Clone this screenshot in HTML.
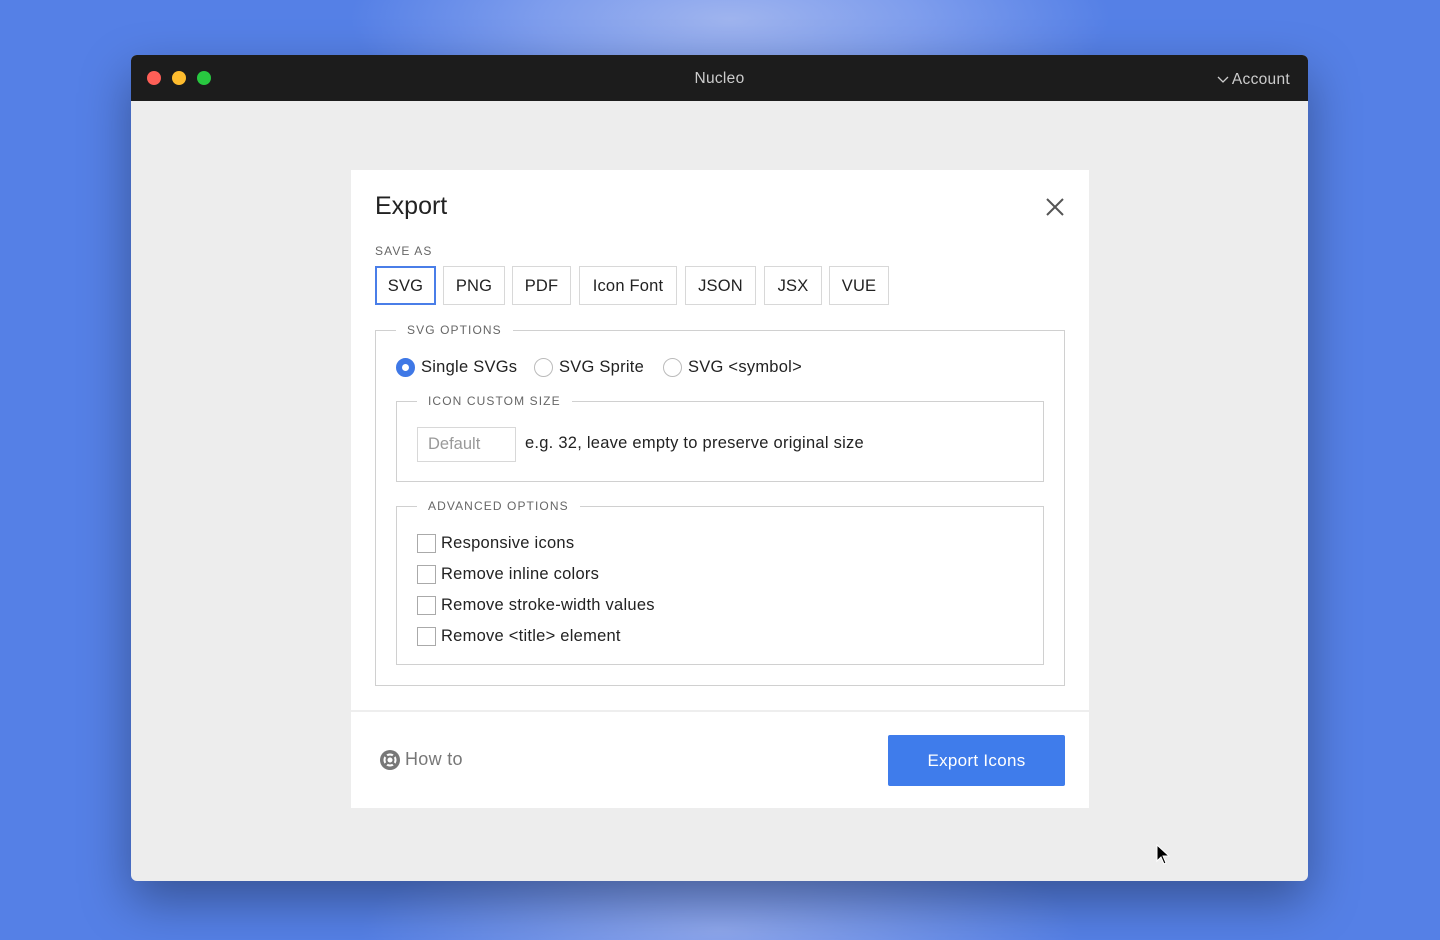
<!DOCTYPE html>
<html><head><meta charset="utf-8"><style>
*{box-sizing:border-box;margin:0;padding:0}
body{width:1440px;height:940px;overflow:hidden;font-family:"Liberation Sans",sans-serif;color:#222;
background:radial-gradient(ellipse 380px 120px at 730px 20px,#9fb4ee 0%,#7e9ded 50%,rgba(85,128,232,0) 100%),radial-gradient(ellipse 360px 100px at 720px 930px,#8fa8ee 0%,rgba(85,128,232,0) 100%),#5580e6;position:relative}
.win{position:absolute;left:131px;top:55px;width:1177px;height:826px;background:#ededed;border-radius:6px;overflow:hidden;box-shadow:0 20px 50px rgba(0,0,0,.35)}
.tb{height:46px;background:#1c1c1c;position:relative;color:#ccc;font-size:15.5px;letter-spacing:.3px}
.dot{position:absolute;top:16px;width:14px;height:14px;border-radius:50%}
.title{position:absolute;left:0;right:0;top:15px;text-align:center}
.acct{position:absolute;right:18px;top:16px}
.dlg{position:absolute;left:220px;top:115px;width:738px;height:638px;background:#fff}
h1{position:absolute;left:24px;top:22px;font-size:25px;font-weight:normal;color:#222}
.x{position:absolute;left:694px;top:27px}
.lbl{font-size:12px;letter-spacing:1.1px;color:#666}
.btn{position:absolute;top:96px;height:39px;border:1px solid #d8d8d8;font-size:16.5px;line-height:39px;text-align:center;letter-spacing:.2px}
.fs{position:absolute;border:1px solid #d0d0d0}
.leg{position:absolute;background:#fff;padding:0 11px;top:-8px;left:20px}
.rad{position:absolute;top:27px;font-size:16.5px;display:flex;align-items:center;gap:6px;letter-spacing:.25px}
.r{width:19px;height:19px;border-radius:50%;border:1px solid #bbb}
.cb{position:absolute;left:20px;font-size:16.5px;display:flex;align-items:center;gap:5px;letter-spacing:.25px}
.c{width:19px;height:19px;border:1px solid #aaa}
</style></head><body>
<div class="win">
 <div class="tb">
  <div class="dot" style="left:16px;background:#fe5f57"></div>
  <div class="dot" style="left:41px;background:#febc2e"></div>
  <div class="dot" style="left:66px;background:#28c840"></div>
  <div class="title">Nucleo</div>
  <div class="acct"><svg width="12" height="8" viewBox="0 0 12 8" style="margin-right:3px"><path d="M1 1l5 5 5-5" fill="none" stroke="#ccc" stroke-width="1.3"/></svg>Account</div>
 </div>
 <div class="dlg">
  <h1>Export</h1>
  <svg class="x" width="20" height="20" viewBox="0 0 20 20"><path d="M2 2l16 16M18 2L2 18" stroke="#555" stroke-width="2"/></svg>
  <div class="lbl" style="position:absolute;left:24px;top:74px">SAVE AS</div>
  <div class="btn" style="left:24px;width:61px;border:2px solid #4a7ee8;line-height:37px">SVG</div>
  <div class="btn" style="left:92px;width:62px">PNG</div>
  <div class="btn" style="left:161px;width:59px">PDF</div>
  <div class="btn" style="left:228px;width:98px">Icon Font</div>
  <div class="btn" style="left:334px;width:71px">JSON</div>
  <div class="btn" style="left:413px;width:58px">JSX</div>
  <div class="btn" style="left:478px;width:60px">VUE</div>
  <div class="fs" style="left:24px;top:160px;width:690px;height:356px">
   <div class="leg lbl">SVG OPTIONS</div>
   <div class="rad" style="left:20px"><div class="r" style="border:6px solid #3f78e6"></div>Single SVGs</div>
   <div class="rad" style="left:158px"><div class="r"></div>SVG Sprite</div>
   <div class="rad" style="left:287px"><div class="r"></div>SVG &lt;symbol&gt;</div>
   <div class="fs" style="left:20px;top:70px;width:648px;height:81px">
    <div class="leg lbl">ICON CUSTOM SIZE</div>
    <div style="position:absolute;left:20px;top:25px;width:99px;height:35px;border:1px solid #d8d8d8;color:#999;font-size:16.5px;padding:7px 10px">Default</div>
    <div style="position:absolute;left:128px;top:32px;font-size:16.5px;letter-spacing:.25px">e.g. 32, leave empty to preserve original size</div>
   </div>
   <div class="fs" style="left:20px;top:175px;width:648px;height:159px">
    <div class="leg lbl">ADVANCED OPTIONS</div>
    <div class="cb" style="top:27px"><div class="c"></div>Responsive icons</div>
    <div class="cb" style="top:58px"><div class="c"></div>Remove inline colors</div>
    <div class="cb" style="top:89px"><div class="c"></div>Remove stroke-width values</div>
    <div class="cb" style="top:120px"><div class="c"></div>Remove &lt;title&gt; element</div>
   </div>
  </div>
  <div style="position:absolute;left:0;right:0;top:540px;border-top:2px solid #eee"></div>
  <div style="position:absolute;left:29px;top:579px;font-size:18px;color:#777;display:flex;align-items:center;gap:5px;letter-spacing:.3px">
   <svg width="20" height="20" viewBox="0 0 20 20"><circle cx="10" cy="10" r="10" fill="#777"/><circle cx="10" cy="10" r="5.5" fill="none" stroke="#fff" stroke-width="2"/><circle cx="10" cy="10" r="2.5" fill="#fff"/><path d="M10 1v18M1 10h18" stroke="#777" stroke-width="2.4" transform="rotate(45 10 10)"/><circle cx="10" cy="10" r="2.5" fill="#fff"/></svg>How to</div>
  <div style="position:absolute;left:537px;top:565px;width:177px;height:51px;background:#3f7ceb;color:#fff;font-size:17px;text-align:center;line-height:51px;border-radius:2px;letter-spacing:.3px">Export Icons</div>
 </div>
 <svg style="position:absolute;left:1025px;top:789px" width="14" height="22" viewBox="0 0 14 22"><path d="M1 1v16l4-4 3 7 2-1-3-7h6z" fill="#000" stroke="#fff" stroke-width="1"/></svg>
</div>
</body></html>
